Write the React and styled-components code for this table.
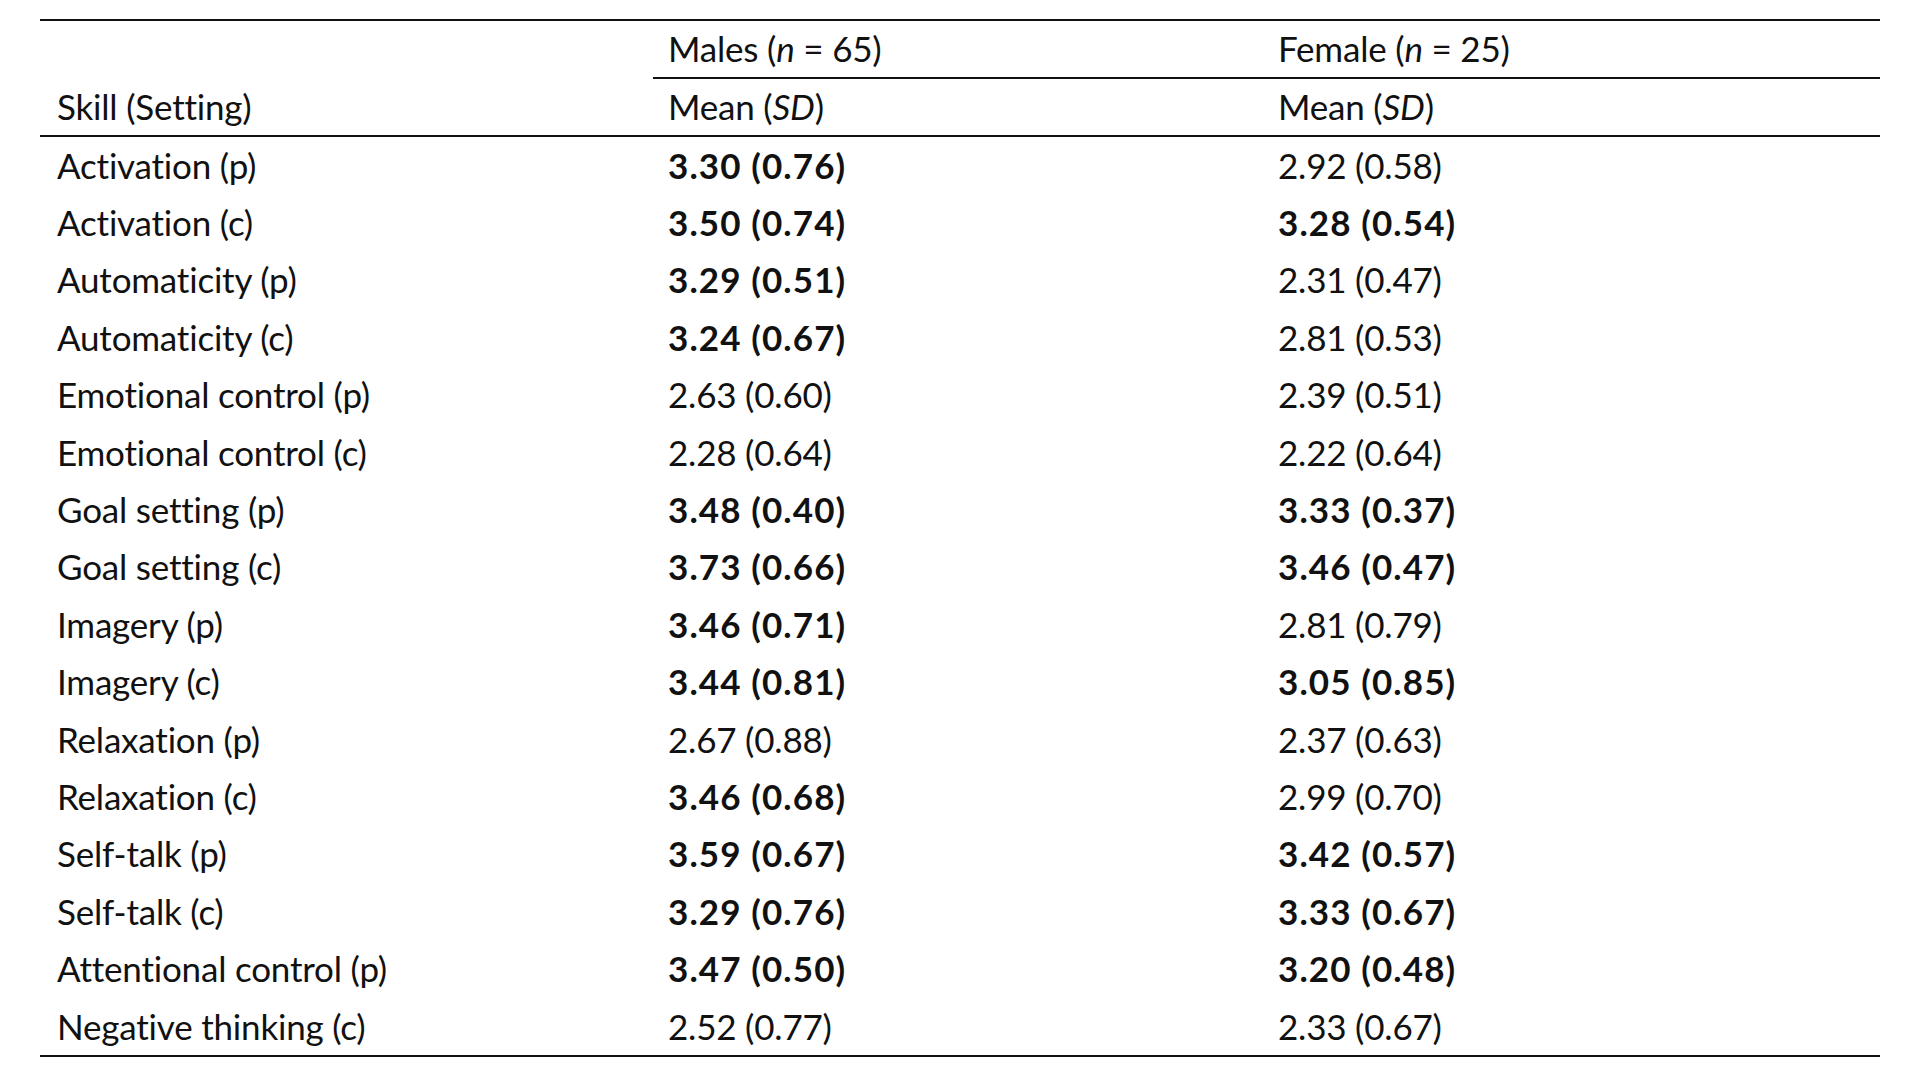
import React from "react";
import styled, { createGlobalStyle } from "styled-components";

const GlobalStyle = createGlobalStyle`
  html, body {
    margin: 0;
    padding: 0;
    background: #ffffff;
  }
  body {
    font-family: Lato, "Open Sans", "Liberation Sans", sans-serif;
    color: #111111;
  }
`;

const Page = styled.div`
  padding: 19px 40px 0 40px;
`;

const Table = styled.div`
  width: 1840px;
  border-top: 2px solid #111;
  border-bottom: 2px solid #111;
`;

const Row = styled.div`
  display: grid;
  grid-template-columns: 613px 610px 617px;
  height: ${(p) => p.$h || 57.4}px;
  align-items: center;
  border-bottom: ${(p) => (p.$rule ? "2px solid #111" : "none")};
`;

const GroupRow = styled.div`
  display: grid;
  grid-template-columns: 613px 1227px;
  height: 57.5px;
`;

const Spacer = styled.div``;

const GroupCells = styled.div`
  display: grid;
  grid-template-columns: 610px 617px;
  align-items: center;
  border-bottom: 2px solid #111;
`;

const Cell = styled.div`
  font-size: 35px;
  line-height: 1;
  padding-left: ${(p) => (p.$first ? 17 : 15)}px;
  padding-top: 0;
  font-weight: ${(p) => (p.$bold ? 700 : 400)};
  letter-spacing: ${(p) => (p.$bold ? "1.1px" : "-0.2px")};
  white-space: nowrap;
`;

const Em = styled.i`
  font-style: italic;
`;

const rows = [
  ["Activation (p)", "3.30 (0.76)", true, "2.92 (0.58)", false],
  ["Activation (c)", "3.50 (0.74)", true, "3.28 (0.54)", true],
  ["Automaticity (p)", "3.29 (0.51)", true, "2.31 (0.47)", false],
  ["Automaticity (c)", "3.24 (0.67)", true, "2.81 (0.53)", false],
  ["Emotional control (p)", "2.63 (0.60)", false, "2.39 (0.51)", false],
  ["Emotional control (c)", "2.28 (0.64)", false, "2.22 (0.64)", false],
  ["Goal setting (p)", "3.48 (0.40)", true, "3.33 (0.37)", true],
  ["Goal setting (c)", "3.73 (0.66)", true, "3.46 (0.47)", true],
  ["Imagery (p)", "3.46 (0.71)", true, "2.81 (0.79)", false],
  ["Imagery (c)", "3.44 (0.81)", true, "3.05 (0.85)", true],
  ["Relaxation (p)", "2.67 (0.88)", false, "2.37 (0.63)", false],
  ["Relaxation (c)", "3.46 (0.68)", true, "2.99 (0.70)", false],
  ["Self-talk (p)", "3.59 (0.67)", true, "3.42 (0.57)", true],
  ["Self-talk (c)", "3.29 (0.76)", true, "3.33 (0.67)", true],
  ["Attentional control (p)", "3.47 (0.50)", true, "3.20 (0.48)", true],
  ["Negative thinking (c)", "2.52 (0.77)", false, "2.33 (0.67)", false],
];

export default function App() {
  return (
    <>
      <GlobalStyle />
      <Page>
        <Table>
          <GroupRow>
            <Spacer />
            <GroupCells>
              <Cell>
                Males (<Em>n</Em> = 65)
              </Cell>
              <Cell>
                Female (<Em>n</Em> = 25)
              </Cell>
            </GroupCells>
          </GroupRow>
          <Row $h={56} $rule>
            <Cell $first>Skill (Setting)</Cell>
            <Cell>
              Mean (<Em>SD</Em>)
            </Cell>
            <Cell>
              Mean (<Em>SD</Em>)
            </Cell>
          </Row>
          {rows.map(([skill, m, mb, f, fb]) => (
            <Row key={skill}>
              <Cell $first>{skill}</Cell>
              <Cell $bold={mb}>{m}</Cell>
              <Cell $bold={fb}>{f}</Cell>
            </Row>
          ))}
        </Table>
      </Page>
    </>
  );
}
